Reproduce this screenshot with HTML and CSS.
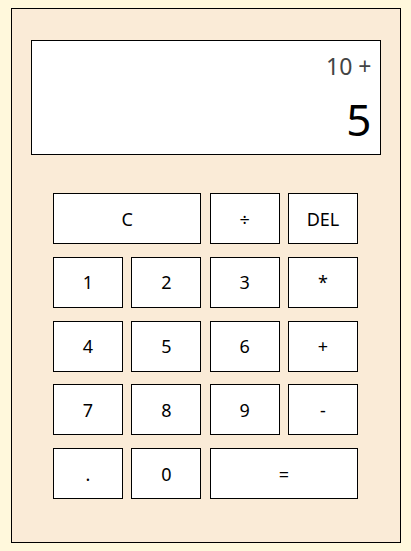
FILE: index.html
```html
<!DOCTYPE html>
<html>
<head>
<meta charset="utf-8">
<link rel="stylesheet" href="styles.css">
</head>
<body>
<div class="calc">
  <div class="display">
    <div class="prev">10 +</div>
    <div class="cur">5</div>
  </div>
  <div class="keys">
    <button class="key span2">C</button>
    <button class="key">÷</button>
    <button class="key">DEL</button>
    <button class="key">1</button>
    <button class="key">2</button>
    <button class="key">3</button>
    <button class="key">*</button>
    <button class="key">4</button>
    <button class="key">5</button>
    <button class="key">6</button>
    <button class="key">+</button>
    <button class="key">7</button>
    <button class="key">8</button>
    <button class="key">9</button>
    <button class="key">-</button>
    <button class="key">.</button>
    <button class="key">0</button>
    <button class="key span2">=</button>
  </div>
</div>
</body>
</html>
```
FILE: styles.css
```css
html, body {
  margin: 0;
  padding: 0;
  background: #fff8dc;
}
body {
  padding-top: 8px;
  font-family: "Noto Sans", "Open Sans", sans-serif;
}
.calc {
  box-sizing: border-box;
  width: 390px;
  height: 535px;
  margin: 0 auto;
  border: 1px solid #000;
  background: #faebd7;
  padding-top: 31px;
}
.display {
  box-sizing: border-box;
  height: 115px;
  margin: 0 19px;
  border: 1px solid #000;
  background: #fff;
  padding: 10px 8px 10px 10px;
  display: flex;
  flex-direction: column;
  align-items: flex-end;
  justify-content: space-between;
}
.prev {
  font-size: 23px;
  line-height: 30px;
  color: #444;
}
.cur {
  font-size: 44px;
  line-height: 50px;
  color: #000;
}
.keys {
  width: 305px;
  margin: 38px auto 0;
  display: grid;
  grid-template-columns: repeat(4, 1fr);
  grid-auto-rows: 51px;
  column-gap: 8.33px;
  row-gap: 12.75px;
}
.key {
  box-sizing: border-box;
  border: 1px solid #000;
  background: #fff;
  font-family: "Noto Sans", "Open Sans", sans-serif;
  font-size: 18px;
  color: #000;
  padding: 0;
  margin: 0;
  border-radius: 0;
}
.span2 {
  grid-column: span 2;
}
```
